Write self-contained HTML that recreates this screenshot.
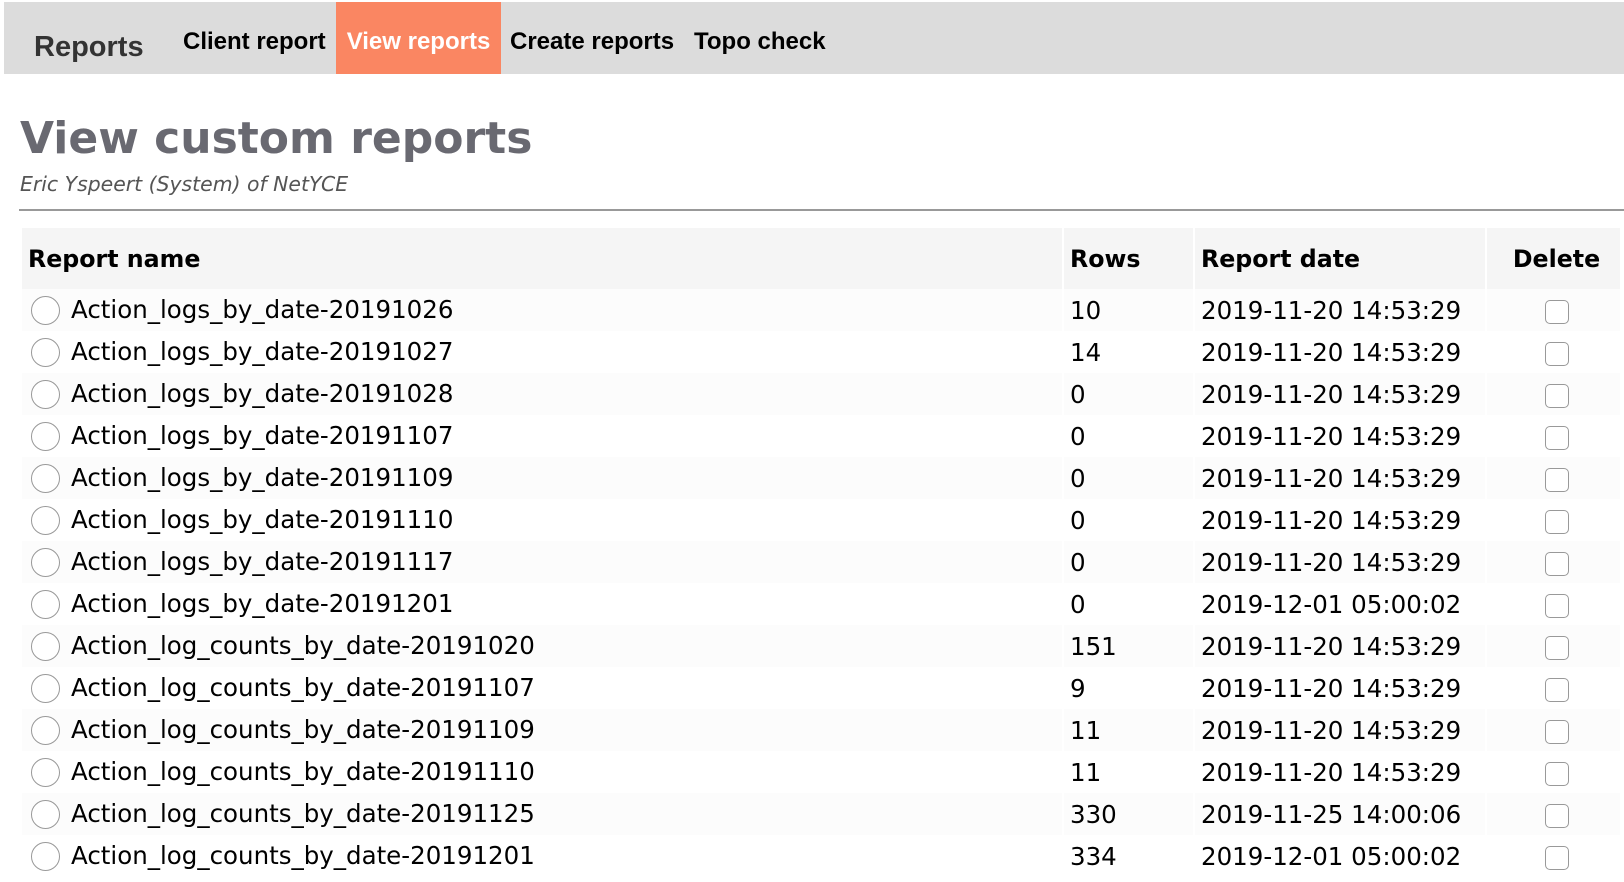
<!DOCTYPE html>
<html><head><style>
body{margin:0;background:#fff;width:1624px;height:882px;overflow:hidden;font-family:"DejaVu Sans",Verdana,sans-serif}
.nav{position:absolute;left:4px;top:2px;width:1620px;height:72px;background:#dcdcdc;font-family:"Liberation Sans",Arial,sans-serif;font-weight:bold}
.nav span{position:absolute;top:0;height:72px;line-height:80px;font-size:24px;color:#000}
.nav .brand{left:30px;font-size:29px;color:#333;line-height:90px;font-weight:bold}
.nav .act{background:#fa8662;color:#fff;left:332px;width:165px;text-align:center}
h1{position:absolute;left:20px;top:110px;margin:0;font-size:44px;color:#696971;font-weight:bold;line-height:58px}
.sub{position:absolute;left:20px;top:172px;font-size:20.4px;font-style:italic;color:#555}
.hr{position:absolute;left:19px;top:209px;width:1605px;height:2px;background:#999}
table{position:absolute;left:20px;top:228px;border-collapse:separate;border-spacing:2px 0;font-size:24.5px;color:#000}
th{background:#f5f5f5;height:61px;text-align:left;padding:0 0 0 6px;font-size:23.7px}
td{height:42px;padding:0 0 0 6px;background:#fff}
tr:nth-child(even) td{background:#fcfcfc}
.r{display:inline-block;width:27px;height:27px;border:1px solid #999;border-radius:50%;vertical-align:middle;margin:0 11px 0 3px;background:#fff;position:relative;top:0}
.c{display:inline-block;width:22px;height:22px;border:1px solid #999;border-radius:5px;background:#fff;vertical-align:middle}
</style></head><body>
<div class="nav"><span class="brand">Reports</span><span style="left:179px">Client report</span><span class="act">View reports</span><span style="left:506px">Create reports</span><span style="left:690px">Topo check</span></div>
<h1>View custom reports</h1>
<div class="sub">Eric Yspeert (System) of NetYCE</div>
<div class="hr"></div>
<table>
<tr><th style="width:1034px">Report name</th><th style="width:123px">Rows</th><th style="width:284px">Report date</th><th style="width:127px;text-align:center;padding:0 0 0 6px">Delete</th></tr>
<tr><td><span class="r"></span>Action_logs_by_date-20191026</td><td>10</td><td>2019-11-20 14:53:29</td><td style="text-align:center;padding:0 0 0 6px"><span class="c"></span></td></tr>
<tr><td><span class="r"></span>Action_logs_by_date-20191027</td><td>14</td><td>2019-11-20 14:53:29</td><td style="text-align:center;padding:0 0 0 6px"><span class="c"></span></td></tr>
<tr><td><span class="r"></span>Action_logs_by_date-20191028</td><td>0</td><td>2019-11-20 14:53:29</td><td style="text-align:center;padding:0 0 0 6px"><span class="c"></span></td></tr>
<tr><td><span class="r"></span>Action_logs_by_date-20191107</td><td>0</td><td>2019-11-20 14:53:29</td><td style="text-align:center;padding:0 0 0 6px"><span class="c"></span></td></tr>
<tr><td><span class="r"></span>Action_logs_by_date-20191109</td><td>0</td><td>2019-11-20 14:53:29</td><td style="text-align:center;padding:0 0 0 6px"><span class="c"></span></td></tr>
<tr><td><span class="r"></span>Action_logs_by_date-20191110</td><td>0</td><td>2019-11-20 14:53:29</td><td style="text-align:center;padding:0 0 0 6px"><span class="c"></span></td></tr>
<tr><td><span class="r"></span>Action_logs_by_date-20191117</td><td>0</td><td>2019-11-20 14:53:29</td><td style="text-align:center;padding:0 0 0 6px"><span class="c"></span></td></tr>
<tr><td><span class="r"></span>Action_logs_by_date-20191201</td><td>0</td><td>2019-12-01 05:00:02</td><td style="text-align:center;padding:0 0 0 6px"><span class="c"></span></td></tr>
<tr><td><span class="r"></span>Action_log_counts_by_date-20191020</td><td>151</td><td>2019-11-20 14:53:29</td><td style="text-align:center;padding:0 0 0 6px"><span class="c"></span></td></tr>
<tr><td><span class="r"></span>Action_log_counts_by_date-20191107</td><td>9</td><td>2019-11-20 14:53:29</td><td style="text-align:center;padding:0 0 0 6px"><span class="c"></span></td></tr>
<tr><td><span class="r"></span>Action_log_counts_by_date-20191109</td><td>11</td><td>2019-11-20 14:53:29</td><td style="text-align:center;padding:0 0 0 6px"><span class="c"></span></td></tr>
<tr><td><span class="r"></span>Action_log_counts_by_date-20191110</td><td>11</td><td>2019-11-20 14:53:29</td><td style="text-align:center;padding:0 0 0 6px"><span class="c"></span></td></tr>
<tr><td><span class="r"></span>Action_log_counts_by_date-20191125</td><td>330</td><td>2019-11-25 14:00:06</td><td style="text-align:center;padding:0 0 0 6px"><span class="c"></span></td></tr>
<tr><td><span class="r"></span>Action_log_counts_by_date-20191201</td><td>334</td><td>2019-12-01 05:00:02</td><td style="text-align:center;padding:0 0 0 6px"><span class="c"></span></td></tr>
</table>
</body></html>
